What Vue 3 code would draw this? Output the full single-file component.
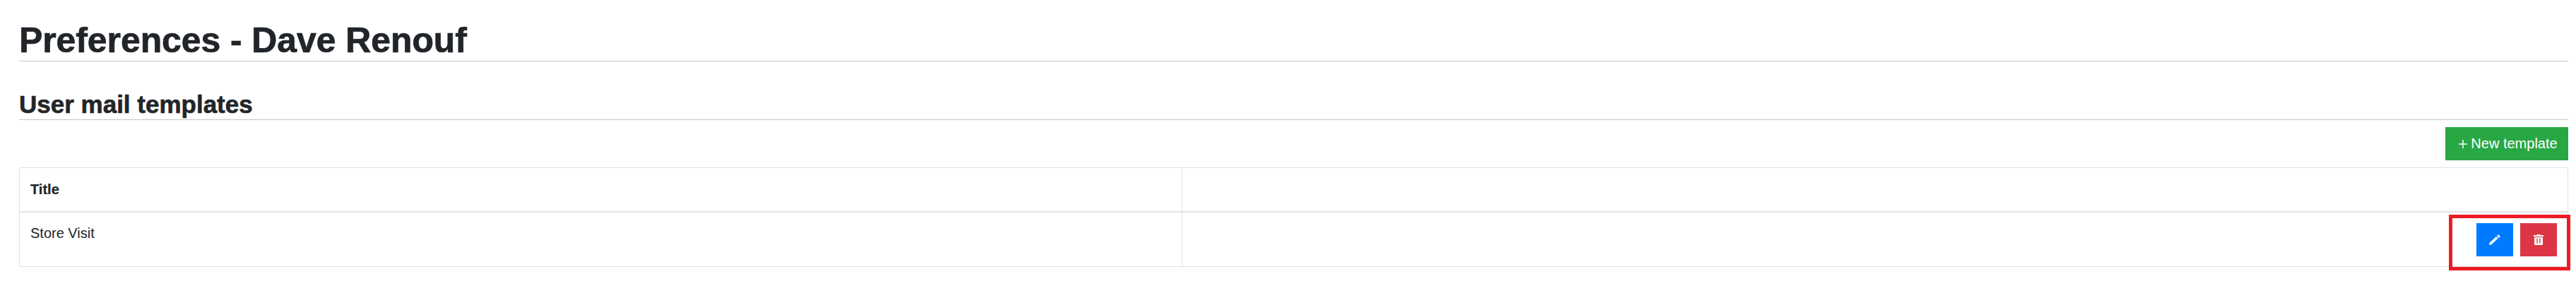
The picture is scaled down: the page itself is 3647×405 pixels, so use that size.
<script setup>
const rows = [{ title: 'Store Visit' }]
</script>

<template>
  <div class="page">
    <h1 class="title">Preferences - Dave Renouf</h1>
    <h2 class="subtitle">User mail templates</h2>
    <div class="toolbar">
      <button class="btn green">
        <svg class="plus" width="12" height="12" viewBox="0 0 12 12"><path fill="#fff" d="M5.250 0h1.500v5.250H12v1.500H6.750V12h-1.500V6.750H0v-1.500h5.250z"/></svg>
        New template
      </button>
    </div>
    <div class="grid-wrap">
      <table class="grid">
        <thead>
          <tr>
            <th class="first">Title</th>
            <th></th>
          </tr>
        </thead>
        <tbody>
          <tr v-for="row in rows" :key="row.title">
            <td class="first">{{ row.title }}</td>
            <td class="actions-cell">
              <div class="actions">
                <button class="btn icon blue" aria-label="Edit">
                  <svg width="16" height="15" viewBox="0 0 16 15"><path fill="#fff" d="M0 15l.8-3.400L10 3l2.700 2.600-9.200 8.500L0 15zM11 2l1.300-1.300a1 1 0 0 1 1.400 0l1.600 1.500a1 1 0 0 1 0 1.400L14 4.900 11 2z"/></svg>
                </button>
                <button class="btn icon red" aria-label="Delete">
                  <svg width="14" height="15" viewBox="0 0 14 15"><path fill="#fff" fill-rule="evenodd" d="M0 1h4.500L5 0h4l.5 1H14v2H0zM1 4h12v9.500a1.500 1.500 0 0 1-1.500 1.500h-9A1.500 1.500 0 0 1 1 13.500zM4.300 5.500v7h1.400v-7zM8.300 5.500v7h1.400v-7z"/></svg>
                </button>
              </div>
            </td>
          </tr>
        </tbody>
      </table>
      <div class="annotation"></div>
    </div>
  </div>
</template>

<style>
html, body { margin: 0; background: #fff; }
</style>

<style scoped>
.page {
  min-height: 405px;
  box-sizing: border-box;
  padding: 28px 11px 0 27px;
  font-family: "Liberation Sans", Arial, sans-serif;
  color: #212529;
}
.title {
  margin: 0;
  height: 58px;
  font-size: 50px;
  line-height: 58px;
  font-weight: 700;
  letter-spacing: -0.1px;
  -webkit-text-stroke: 0.7px #212529;
  border-bottom: 1px solid #c4c4c4;
}
.subtitle {
  margin: 40px 0 0;
  height: 42px;
  font-size: 35px;
  line-height: 42px;
  font-weight: 700;
  -webkit-text-stroke: 0.6px #212529;
  border-bottom: 1px solid #c4c4c4;
}
.toolbar {
  display: flex;
  justify-content: flex-end;
  margin-top: 10px;
}
.btn {
  border: 0;
  border-radius: 0;
  color: #fff;
  font-family: inherit;
  padding: 0;
  display: inline-flex;
  align-items: center;
  justify-content: center;
  height: 47px;
}
.green {
  width: 174px;
  padding-left: 4px;
  box-sizing: border-box;
  background: #28a745;
  font-size: 20px;
  gap: 5px;
}
.plus { flex: none; }
.blue { background: #007bff; }
.red { background: #dc3545; }
.icon { width: 52px; }
.grid-wrap {
  position: relative;
  margin-top: 10px;
}
.grid {
  width: 100%;
  border-collapse: collapse;
  table-layout: fixed;
  font-size: 20px;
  line-height: 24px;
}
.grid th, .grid td {
  border: 1px solid #dee2e6;
  padding: 0 15px;
  text-align: left;
  vertical-align: top;
  box-sizing: border-box;
}
.grid .first { width: 1646px; }
.grid th {
  height: 62px;
  padding-top: 18px;
  font-weight: 700;
  -webkit-text-stroke: 0.2px #212529;
  border-bottom: 2px solid #dee2e6;
}
.grid td {
  height: 78px;
  padding-top: 17px;
  font-weight: 400;
}
.grid .actions-cell { padding-top: 0; }
.actions {
  display: flex;
  justify-content: flex-end;
  gap: 10px;
  padding-top: 15px;
}
.annotation {
  position: absolute;
  right: -3px;
  bottom: -5px;
  width: 172px;
  height: 79px;
  border: 5px solid #ed1c24;
  box-sizing: border-box;
  pointer-events: none;
}
</style>
